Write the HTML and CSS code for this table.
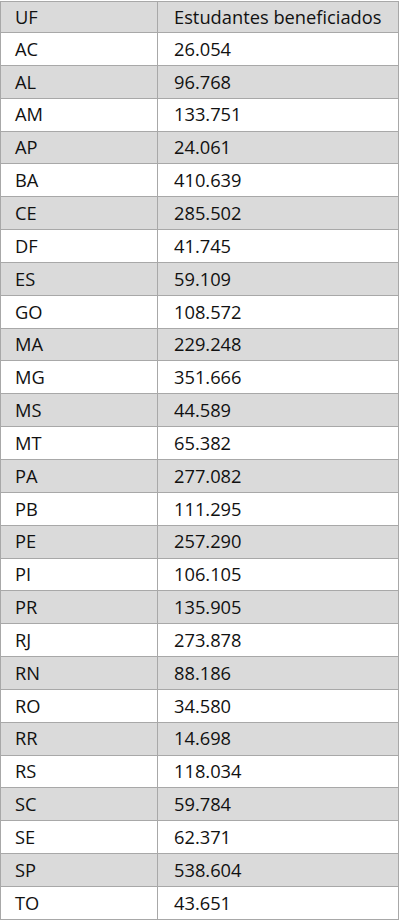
FILE: index.html
```html
<!DOCTYPE html>
<html lang="pt-BR">
<head>
<meta charset="utf-8">
<title>Estudantes beneficiados por UF</title>
<link rel="stylesheet" href="styles.css">
</head>
<body>
<table class="uf-table">
  <thead>
    <tr><th class="col-uf">UF</th><th class="col-num">Estudantes beneficiados</th></tr>
  </thead>
  <tbody>
    <tr><td>AC</td><td>26.054</td></tr>
    <tr><td>AL</td><td>96.768</td></tr>
    <tr><td>AM</td><td>133.751</td></tr>
    <tr><td>AP</td><td>24.061</td></tr>
    <tr><td>BA</td><td>410.639</td></tr>
    <tr><td>CE</td><td>285.502</td></tr>
    <tr><td>DF</td><td>41.745</td></tr>
    <tr><td>ES</td><td>59.109</td></tr>
    <tr><td>GO</td><td>108.572</td></tr>
    <tr><td>MA</td><td>229.248</td></tr>
    <tr><td>MG</td><td>351.666</td></tr>
    <tr><td>MS</td><td>44.589</td></tr>
    <tr><td>MT</td><td>65.382</td></tr>
    <tr><td>PA</td><td>277.082</td></tr>
    <tr><td>PB</td><td>111.295</td></tr>
    <tr><td>PE</td><td>257.290</td></tr>
    <tr><td>PI</td><td>106.105</td></tr>
    <tr><td>PR</td><td>135.905</td></tr>
    <tr><td>RJ</td><td>273.878</td></tr>
    <tr><td>RN</td><td>88.186</td></tr>
    <tr><td>RO</td><td>34.580</td></tr>
    <tr><td>RR</td><td>14.698</td></tr>
    <tr><td>RS</td><td>118.034</td></tr>
    <tr><td>SC</td><td>59.784</td></tr>
    <tr><td>SE</td><td>62.371</td></tr>
    <tr><td>SP</td><td>538.604</td></tr>
    <tr><td>TO</td><td>43.651</td></tr>
  </tbody>
</table>
</body>
</html>
```

FILE: styles.css
```css
html, body {
  margin: 0;
  padding: 0;
  background: #ffffff;
}

.uf-table {
  border-collapse: collapse;
  width: 399px;
  margin-top: 1px;
  font-family: "Open Sans", "Liberation Sans", sans-serif;
  font-size: 18.3px;
  font-weight: 500;
  color: #111111;
  table-layout: fixed;
}

.uf-table th,
.uf-table td {
  border: 1px solid #a8a8a8;
  height: 32.85px;
  padding: 0 0 0 14px;
  text-align: left;
  font-weight: 500;
  vertical-align: middle;
  box-sizing: border-box;
  line-height: 1;
}

.uf-table th + th,
.uf-table td + td {
  padding-left: 16px;
}

.uf-table th {
  height: 31px;
}

.col-uf {
  width: 157px;
}

.uf-table thead tr,
.uf-table tbody tr:nth-child(even) {
  background: #dadada;
}

.uf-table tbody tr:nth-child(odd) {
  background: #ffffff;
}
```
